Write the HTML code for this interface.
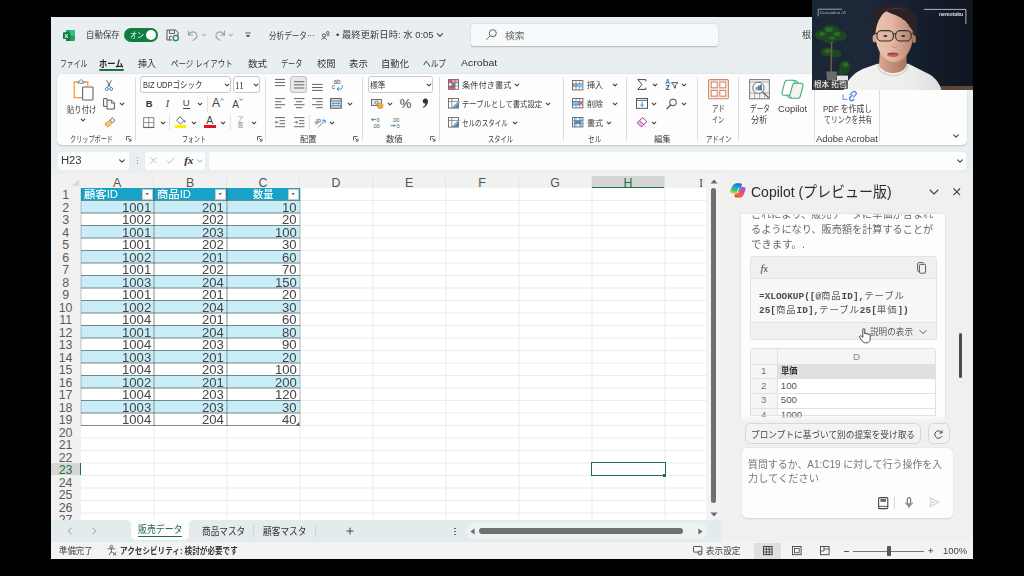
<!DOCTYPE html>
<html lang="ja"><head><meta charset="utf-8"><title>Excel Copilot</title>
<style>

html,body{margin:0;padding:0;background:#000;}
body{width:1024px;height:576px;overflow:hidden;font-family:"Liberation Sans","Noto Sans CJK JP",sans-serif;}
#root{position:relative;width:1024px;height:576px;overflow:hidden;background:#000;}
#root div,#root svg,#root span.t{position:absolute;}
#root div{box-sizing:border-box;}
span.t{white-space:nowrap;transform-origin:0 50%;display:block;}
svg{overflow:visible;}

</style></head>
<body><div id="root">
<div style="left:51px;top:17px;width:922px;height:541.8px;background:#e9eef1;"></div>
<svg style="left:62.5px;top:29.5px;" width="12" height="11" viewBox="0 0 12 11"><rect x="3" y="0" width="9" height="11" rx="1" fill="#21a366"/><rect x="7.5" y="0" width="4.5" height="5.5" fill="#33c481"/><rect x="3" y="5.5" width="4.5" height="5.5" fill="#107c41"/><rect x="0" y="2.2" width="6.8" height="6.8" rx="0.8" fill="#0f7a3f"/><text x="3.4" y="7.6" font-size="5.4" font-weight="700" fill="#fff" text-anchor="middle" font-family="Liberation Sans, sans-serif">X</text></svg>
<span class="t" style="top:28px;height:14px;line-height:14px;font-size:8.6px;color:#3b3b3b;left:85.60px;transform:scaleX(0.9828);">自動保存</span>
<div style="left:124px;top:27.6px;width:34px;height:14.2px;background:#107c41;border-radius:7.1px;"></div>
<span class="t" style="top:29px;height:13px;line-height:13px;font-size:7.6px;color:#fff;left:129.50px;transform:scaleX(0.9218);">オン</span>
<div style="left:146px;top:29.6px;width:10.2px;height:10.2px;background:#fff;border-radius:50%;"></div>
<svg style="left:166px;top:28.7px;" width="13" height="12" viewBox="0 0 13 12"><path d="M1 1 H9.5 L12 3.5 V6" fill="none" stroke="#555" stroke-width="1"/><path d="M1 1 V11 H6" fill="none" stroke="#555" stroke-width="1"/><path d="M3.5 1 V4.5 H8.5 V1" fill="none" stroke="#555" stroke-width="0.9"/><path d="M3.5 11 V7.5 H6" fill="none" stroke="#555" stroke-width="0.9"/><circle cx="9.8" cy="9" r="2.6" fill="none" stroke="#1e8e4e" stroke-width="1.2"/><path d="M11 5.6 L12.4 7 L10.6 7.6 Z M8.6 12.4 L7.2 11 L9 10.4 Z" fill="#1e8e4e"/></svg>
<svg style="left:187px;top:29.5px;" width="12" height="11" viewBox="0 0 12 11"><path d="M1.5 1 V5 H5.5" fill="none" stroke="#9aa0a4" stroke-width="1.1" stroke-linecap="round"/><path d="M1.8 4.8 C3 2.2 6 1.2 8.2 2.4 C10.8 3.8 10.6 7.4 8 9 L6 10.4" fill="none" stroke="#9aa0a4" stroke-width="1.1" stroke-linecap="round"/></svg>
<svg style="left:199.8px;top:31.2px;" width="8" height="8" viewBox="0 0 8 8"><path d="M2.4 3.2 L4 4.8 L5.6 3.2" fill="none" stroke="#b0b4b8" stroke-width="1.1" stroke-linecap="round" stroke-linejoin="round"/></svg>
<svg style="left:214px;top:29.5px;" width="12" height="11" viewBox="0 0 12 11"><path d="M10.5 1 V5 H6.5" fill="none" stroke="#9aa0a4" stroke-width="1.1" stroke-linecap="round"/><path d="M10.2 4.8 C9 2.2 6 1.2 3.8 2.4 C1.2 3.8 1.4 7.4 4 9 L6 10.4" fill="none" stroke="#9aa0a4" stroke-width="1.1" stroke-linecap="round"/></svg>
<svg style="left:227.3px;top:31.2px;" width="8" height="8" viewBox="0 0 8 8"><path d="M2.4 3.2 L4 4.8 L5.6 3.2" fill="none" stroke="#b0b4b8" stroke-width="1.1" stroke-linecap="round" stroke-linejoin="round"/></svg>
<svg style="left:244.5px;top:32px;" width="6" height="6" viewBox="0 0 6 6"><path d="M0.5 1 H5.5" stroke="#555" stroke-width="1"/><path d="M0.8 3 H5.2 L3 5.4 Z" fill="#555"/></svg>
<span class="t" style="top:28px;height:14px;line-height:14px;font-size:8.6px;color:#3b3b3b;left:268.50px;transform:scaleX(0.8819);">分析データ<span style="font-family:'Noto Sans CJK JP',sans-serif">…</span></span>
<svg style="left:320.5px;top:30.5px;" width="9" height="9" viewBox="0 0 9 9"><circle cx="3" cy="4.6" r="1.6" fill="none" stroke="#444" stroke-width="0.9"/><path d="M0.6 8.6 C0.8 6.6 5.2 6.6 5.4 8.6" fill="none" stroke="#444" stroke-width="0.9"/><circle cx="6.8" cy="1.8" r="1.3" fill="none" stroke="#444" stroke-width="0.8"/><path d="M5.6 4.8 C6 3.6 8.2 3.8 8.5 5" fill="none" stroke="#444" stroke-width="0.8"/></svg>
<span class="t" style="top:28px;height:14px;line-height:14px;font-size:8.8px;color:#3b3b3b;left:336.00px;transform:scaleX(1.0648);">• 最終更新日時: 水 0:05</span>
<svg style="left:435.8px;top:31px;" width="8" height="8" viewBox="0 0 8 8"><path d="M1.4 2.7 L4 5.3 L6.6 2.7" fill="none" stroke="#444" stroke-width="1.1" stroke-linecap="round" stroke-linejoin="round"/></svg>
<div style="left:470.5px;top:24.2px;width:247.8px;height:21.6px;background:#f7f9fa;border-radius:3px;box-shadow:0 0.5px 1.5px rgba(0,0,0,0.25);"></div>
<svg style="left:485.6px;top:29px;" width="11" height="11" viewBox="0 0 11 11"><circle cx="6.8" cy="4.2" r="3.5" fill="none" stroke="#555" stroke-width="0.9"/><path d="M4.2 6.8 L0.6 10.4" stroke="#555" stroke-width="0.9" stroke-linecap="round"/></svg>
<span class="t" style="top:28px;height:15px;line-height:15px;font-size:9.4px;color:#666;left:504.80px;transform:scaleX(1.0498);">検索</span>
<span class="t" style="top:28px;height:14px;line-height:14px;font-size:9px;color:#3b3b3b;left:802.00px;transform:scaleX(0.9991);">根本</span>
<span class="t" style="top:56px;height:15px;line-height:15px;font-size:9.4px;color:#333;left:59.50px;transform:scaleX(0.7277);">ファイル</span>
<span class="t" style="top:56px;height:15px;line-height:15px;font-size:9.4px;color:#333;left:137.50px;transform:scaleX(0.9592);">挿入</span>
<span class="t" style="top:56px;height:15px;line-height:15px;font-size:9.4px;color:#333;left:170.80px;transform:scaleX(0.7969);">ページ レイアウト</span>
<span class="t" style="top:56px;height:15px;line-height:15px;font-size:9.4px;color:#333;left:247.50px;transform:scaleX(1.0125);">数式</span>
<span class="t" style="top:56px;height:15px;line-height:15px;font-size:9.4px;color:#333;left:281.00px;transform:scaleX(0.7569);">データ</span>
<span class="t" style="top:56px;height:15px;line-height:15px;font-size:9.4px;color:#333;left:316.80px;transform:scaleX(0.9965);">校閲</span>
<span class="t" style="top:56px;height:15px;line-height:15px;font-size:9.4px;color:#333;left:349.00px;transform:scaleX(1.0018);">表示</span>
<span class="t" style="top:56px;height:15px;line-height:15px;font-size:9.4px;color:#333;left:381.00px;transform:scaleX(0.9950);">自動化</span>
<span class="t" style="top:56px;height:15px;line-height:15px;font-size:9.4px;color:#333;left:423.00px;transform:scaleX(0.8173);">ヘルプ</span>
<span class="t" style="top:55px;height:15px;line-height:15px;font-size:9.4px;color:#333;left:461.00px;transform:scaleX(1.1234);">Acrobat</span>
<span class="t" style="top:56px;height:15px;line-height:15px;font-size:9.4px;color:#222;font-weight:700;left:99.30px;transform:scaleX(0.8799);">ホーム</span>
<div style="left:99.3px;top:69.2px;width:24.6px;height:1.6px;background:#1e7145;border-radius:1px;"></div>
<div style="left:57px;top:74px;width:910px;height:71.2px;background:#fdfdfd;border-radius:5px;box-shadow:0 0.5px 1.5px rgba(0,0,0,0.18);"></div>
<svg style="left:73px;top:79px;" width="21" height="22" viewBox="0 0 21 22"><path d="M5 3 H1.2 V18.6 H9" fill="none" stroke="#e8a33d" stroke-width="1.3"/><path d="M11 3 H14.8 V7" fill="none" stroke="#e8a33d" stroke-width="1.3"/><path d="M5 4.2 V2.6 H6.4 C6.4 0.2 9.6 0.2 9.6 2.6 H11 V4.2 Z" fill="#fdfdfd" stroke="#777" stroke-width="0.9"/><rect x="9.6" y="8" width="10.4" height="13" rx="0.8" fill="#fdfdfd" stroke="#666" stroke-width="1.1"/></svg>
<span class="t" style="top:103px;height:14px;line-height:14px;font-size:8.6px;color:#3b3b3b;left:67.00px;transform:scaleX(0.8578);">貼り付け</span>
<svg style="left:78.8px;top:116.2px;" width="8" height="8" viewBox="0 0 8 8"><path d="M2.2 3.1 L4 4.9 L5.8 3.1" fill="none" stroke="#444" stroke-width="1.1" stroke-linecap="round" stroke-linejoin="round"/></svg>
<svg style="left:103.5px;top:80px;" width="10" height="11" viewBox="0 0 10 11"><path d="M2.6 0.4 L6.6 7.6 M7.4 0.4 L3.4 7.6" stroke="#555" stroke-width="0.9" fill="none"/><circle cx="2.8" cy="9" r="1.5" fill="none" stroke="#3c8fd0" stroke-width="1"/><circle cx="7.2" cy="9" r="1.5" fill="none" stroke="#3c8fd0" stroke-width="1"/></svg>
<svg style="left:103px;top:98px;" width="13" height="11.5" viewBox="0 0 13 11.5"><path d="M4 2.2 V0.6 H0.6 V8.4 H3.6" fill="none" stroke="#555" stroke-width="1"/><path d="M4 2.2 H8.6 L11.4 5 V11 H4 Z" fill="#fdfdfd" stroke="#555" stroke-width="1"/><path d="M8.4 2.4 V5.2 H11.2" fill="none" stroke="#555" stroke-width="0.8"/></svg>
<svg style="left:118.2px;top:99.6px;" width="8" height="8" viewBox="0 0 8 8"><path d="M2.2 3.1 L4 4.9 L5.8 3.1" fill="none" stroke="#444" stroke-width="1.1" stroke-linecap="round" stroke-linejoin="round"/></svg>
<svg style="left:104px;top:116.8px;" width="12" height="11" viewBox="0 0 12 11"><path d="M8.2 0.8 L11 3.4 L8.6 5.6 L6 3 Z" fill="none" stroke="#555" stroke-width="0.9"/><path d="M5.8 3.2 L8.4 5.8 L4 10.2 L0.8 7 Z" fill="#f6c58b" stroke="#e58a2c" stroke-width="0.9"/></svg>
<span class="t" style="top:132px;height:14px;line-height:14px;font-size:8.4px;color:#3b3b3b;left:69.50px;transform:scaleX(0.7335);">クリップボード</span>
<svg style="left:126.3px;top:135.6px;" width="6" height="6" viewBox="0 0 6 6"><path d="M0.5 4.5 V0.5 H4.5" fill="none" stroke="#555" stroke-width="0.9"/><path d="M2 2 L5 5 M5 2.6 V5 H2.6" fill="none" stroke="#555" stroke-width="0.9"/></svg>
<div style="left:134.7px;top:77px;width:1px;height:64px;background:#dcdcdc;"></div>
<div style="left:140.2px;top:76.3px;width:90.6px;height:17.2px;background:#fff;border:1px solid #c9c9c9;border-radius:3px;"></div>
<span class="t" style="top:78px;height:14px;line-height:14px;font-size:9.2px;color:#333;left:142.60px;transform:scaleX(0.8137);">BIZ UDPゴシック</span>
<svg style="left:222.9px;top:81.4px;" width="8" height="8" viewBox="0 0 8 8"><path d="M2.2 3.1 L4 4.9 L5.8 3.1" fill="none" stroke="#444" stroke-width="1.1" stroke-linecap="round" stroke-linejoin="round"/></svg>
<div style="left:232.8px;top:76.3px;width:27px;height:17.2px;background:#fff;border:1px solid #c9c9c9;border-radius:3px;"></div>
<span class="t" style="top:78px;height:15px;line-height:15px;font-size:9.8px;color:#333;font-family:'Liberation Serif','Noto Serif CJK SC',serif;left:235.20px;transform:scaleX(0.9113);">11</span>
<svg style="left:251.5px;top:81.4px;" width="8" height="8" viewBox="0 0 8 8"><path d="M2.2 3.1 L4 4.9 L5.8 3.1" fill="none" stroke="#444" stroke-width="1.1" stroke-linecap="round" stroke-linejoin="round"/></svg>
<span class="t" style="top:96px;height:15px;line-height:15px;font-size:9.4px;color:#333;font-weight:700;left:145.81px;">B</span>
<span class="t" style="top:96px;height:15px;line-height:15px;font-size:10.4px;color:#444;font-family:'Liberation Serif','Noto Serif CJK SC',serif;left:165.87px;font-style:italic;">I</span>
<span class="t" style="top:95px;height:15px;line-height:15px;font-size:9.6px;color:#444;left:182.73px;">U</span>
<div style="left:182.6px;top:108px;width:7.2px;height:0.9px;background:#444;"></div>
<svg style="left:195.8px;top:99.8px;" width="8" height="8" viewBox="0 0 8 8"><path d="M2.2 3.1 L4 4.9 L5.8 3.1" fill="none" stroke="#444" stroke-width="1.1" stroke-linecap="round" stroke-linejoin="round"/></svg>
<div style="left:207.1px;top:96px;width:1px;height:16px;background:#e2e2e2;"></div>
<span class="t" style="top:94px;height:18px;line-height:18px;font-size:12px;color:#444;left:211.99px;">A</span>
<svg style="left:219.8px;top:97.6px;" width="4" height="3" viewBox="0 0 4 3"><path d="M0.4 2.4 L2 0.6 L3.6 2.4" fill="none" stroke="#2a7fc1" stroke-width="0.9"/></svg>
<span class="t" style="top:97px;height:15px;line-height:15px;font-size:10px;color:#444;left:232.26px;">A</span>
<svg style="left:238.6px;top:98.2px;" width="4" height="3" viewBox="0 0 4 3"><path d="M0.4 0.6 L2 2.4 L3.6 0.6" fill="none" stroke="#2a7fc1" stroke-width="0.9"/></svg>
<svg style="left:143.3px;top:116.6px;" width="11.4" height="11" viewBox="0 0 11.4 11"><rect x="0.6" y="0.6" width="10.2" height="9.8" fill="none" stroke="#8a8a8a" stroke-width="1"/><path d="M5.7 0.6 V10.4 M0.6 5.5 H10.8" stroke="#8a8a8a" stroke-width="0.9"/><path d="M0.2 10.5 H11.2" stroke="#666" stroke-width="1.1"/></svg>
<svg style="left:158.5px;top:118.6px;" width="8" height="8" viewBox="0 0 8 8"><path d="M2.2 3.1 L4 4.9 L5.8 3.1" fill="none" stroke="#444" stroke-width="1.1" stroke-linecap="round" stroke-linejoin="round"/></svg>
<div style="left:169px;top:114.5px;width:1px;height:15.5px;background:#e2e2e2;"></div>
<svg style="left:175px;top:116px;" width="12" height="9" viewBox="0 0 12 9"><path d="M5 0.8 L9 4.6 L5.4 8 L1.6 4.4 Z" fill="none" stroke="#555" stroke-width="0.9"/><path d="M9.4 3.6 C10.8 5.2 10.8 6.6 9.8 6.6 C8.8 6.6 8.8 5.2 9.4 3.6 Z" fill="#2a7fc1"/></svg>
<div style="left:174.5px;top:125.2px;width:11.6px;height:3px;background:#ffee00;"></div>
<svg style="left:189.8px;top:118.6px;" width="8" height="8" viewBox="0 0 8 8"><path d="M2.2 3.1 L4 4.9 L5.8 3.1" fill="none" stroke="#444" stroke-width="1.1" stroke-linecap="round" stroke-linejoin="round"/></svg>
<span class="t" style="top:113px;height:15px;line-height:15px;font-size:10.4px;color:#444;left:206.33px;">A</span>
<div style="left:204px;top:125.2px;width:11.6px;height:3px;background:#e0141e;"></div>
<svg style="left:219.3px;top:118.6px;" width="8" height="8" viewBox="0 0 8 8"><path d="M2.2 3.1 L4 4.9 L5.8 3.1" fill="none" stroke="#444" stroke-width="1.1" stroke-linecap="round" stroke-linejoin="round"/></svg>
<div style="left:230px;top:114.5px;width:1px;height:15.5px;background:#e2e2e2;"></div>
<span class="t" style="top:114px;height:10px;line-height:10px;font-size:6px;color:#999;left:237.59px;">ア</span>
<span class="t" style="top:120px;height:10px;line-height:10px;font-size:6px;color:#999;left:237.59px;">亜</span>
<svg style="left:250px;top:118.6px;" width="8" height="8" viewBox="0 0 8 8"><path d="M2.2 3.1 L4 4.9 L5.8 3.1" fill="none" stroke="#444" stroke-width="1.1" stroke-linecap="round" stroke-linejoin="round"/></svg>
<span class="t" style="top:132px;height:14px;line-height:14px;font-size:8.4px;color:#3b3b3b;left:182.30px;transform:scaleX(0.7164);">フォント</span>
<svg style="left:256.8px;top:135.6px;" width="6" height="6" viewBox="0 0 6 6"><path d="M0.5 4.5 V0.5 H4.5" fill="none" stroke="#555" stroke-width="0.9"/><path d="M2 2 L5 5 M5 2.6 V5 H2.6" fill="none" stroke="#555" stroke-width="0.9"/></svg>
<div style="left:265.1px;top:77px;width:1px;height:64px;background:#dcdcdc;"></div>
<svg style="left:275px;top:78px;" width="10" height="9" viewBox="0 0 10 9"><path d="M0 1.4 H10" stroke="#555" stroke-width="0.9"/><path d="M0 4.5 H10" stroke="#555" stroke-width="0.9"/><path d="M0 7.6 H10" stroke="#555" stroke-width="0.9"/></svg>
<div style="left:290px;top:76.3px;width:17.3px;height:17.2px;background:#e9e9e9;border:1px solid #bdbdbd;border-radius:3px;"></div>
<svg style="left:293.6px;top:80px;" width="10.4" height="9" viewBox="0 0 10.4 9"><path d="M0 1.7 H10.4" stroke="#555" stroke-width="0.9"/><path d="M0 4.8 H10.4" stroke="#555" stroke-width="0.9"/><path d="M0 8 H10.4" stroke="#555" stroke-width="0.9"/></svg>
<svg style="left:312.3px;top:83px;" width="10.7" height="9" viewBox="0 0 10.7 9"><path d="M0 1.4 H10.7" stroke="#555" stroke-width="0.9"/><path d="M0 4.5 H10.7" stroke="#555" stroke-width="0.9"/><path d="M0 7.4 H10.7" stroke="#555" stroke-width="0.9"/></svg>
<span class="t" style="top:76px;height:11px;line-height:11px;font-size:6.4px;color:#555;left:333.45px;">ab</span>
<span class="t" style="top:81px;height:11px;line-height:11px;font-size:6.4px;color:#555;left:331.80px;">c</span>
<svg style="left:335.5px;top:84.6px;" width="7" height="6" viewBox="0 0 7 6"><path d="M6.2 0.4 V2.6 C6.2 3.6 5.6 4 4.6 4 H1.2 M2.8 2.2 L1 4 L2.8 5.8" fill="none" stroke="#2a7fc1" stroke-width="0.9"/></svg>
<svg style="left:275px;top:98px;" width="10" height="10.4" viewBox="0 0 10 10.4"><path d="M0 0.6 H10" stroke="#555" stroke-width="0.9"/><path d="M0 3.7 H6.4" stroke="#555" stroke-width="0.9"/><path d="M0 6.7 H10" stroke="#555" stroke-width="0.9"/><path d="M0 9.7 H6.4" stroke="#555" stroke-width="0.9"/></svg>
<svg style="left:293.6px;top:98px;" width="10.4" height="10.4" viewBox="0 0 10.4 10.4"><path d="M0 0.6 H10.4" stroke="#555" stroke-width="0.9"/><path d="M2 3.7 H8.4" stroke="#555" stroke-width="0.9"/><path d="M0 6.7 H10.4" stroke="#555" stroke-width="0.9"/><path d="M2 9.7 H8.4" stroke="#555" stroke-width="0.9"/></svg>
<svg style="left:312.3px;top:98px;" width="10.7" height="10.4" viewBox="0 0 10.7 10.4"><path d="M0 0.6 H10.7" stroke="#555" stroke-width="0.9"/><path d="M4.1 3.7 H10.7" stroke="#555" stroke-width="0.9"/><path d="M0 6.7 H10.7" stroke="#555" stroke-width="0.9"/><path d="M4.1 9.7 H10.7" stroke="#555" stroke-width="0.9"/></svg>
<svg style="left:330.3px;top:97.8px;" width="11.8" height="10.8" viewBox="0 0 11.8 10.8"><rect x="0.6" y="0.6" width="10.6" height="9.6" fill="#d8ecf8" stroke="#555" stroke-width="1"/><path d="M0.6 3 H11.2 M0.6 7.8 H11.2" stroke="#555" stroke-width="0.8"/><path d="M2.4 5.4 H9.4 M3.6 4.2 L2.4 5.4 L3.6 6.6 M8.2 4.2 L9.4 5.4 L8.2 6.6" fill="none" stroke="#2a7fc1" stroke-width="0.8"/></svg>
<svg style="left:345.8px;top:99.8px;" width="8" height="8" viewBox="0 0 8 8"><path d="M2.2 3.1 L4 4.9 L5.8 3.1" fill="none" stroke="#444" stroke-width="1.1" stroke-linecap="round" stroke-linejoin="round"/></svg>
<svg style="left:275px;top:117px;" width="10" height="10.4" viewBox="0 0 10 10.4"><path d="M0 0.6 H10" stroke="#555" stroke-width="0.9"/><path d="M0 9.7 H10" stroke="#555" stroke-width="0.9"/><path d="M4.6 3.7 H10" stroke="#555" stroke-width="0.9"/><path d="M4.6 6.7 H10" stroke="#555" stroke-width="0.9"/><path d="M0.4 5.2 H3.6 M1.6 3.8 L0.4 5.2 L1.6 6.6" fill="none" stroke="#2a7fc1" stroke-width="0.9"/></svg>
<svg style="left:293.6px;top:117px;" width="10.4" height="10.4" viewBox="0 0 10.4 10.4"><path d="M0 0.6 H10.4" stroke="#555" stroke-width="0.9"/><path d="M0 9.7 H10.4" stroke="#555" stroke-width="0.9"/><path d="M5 3.7 H10.4" stroke="#555" stroke-width="0.9"/><path d="M5 6.7 H10.4" stroke="#555" stroke-width="0.9"/><path d="M0.2 5.2 H3.6 M2.4 3.8 L3.6 5.2 L2.4 6.6" fill="none" stroke="#2a7fc1" stroke-width="0.9"/></svg>
<div style="left:309.2px;top:114.5px;width:1px;height:15.5px;background:#e2e2e2;"></div>
<svg style="left:314px;top:116.5px;" width="12" height="11" viewBox="0 0 12 11"><text x="1" y="6.4" font-size="6.4" fill="#555" transform="rotate(-35 4 6)" font-family="Liberation Sans, sans-serif">ab</text><path d="M4 10.4 L11 3.4 M8.2 3.2 H11.2 V6.2" fill="none" stroke="#2a7fc1" stroke-width="0.9"/></svg>
<svg style="left:327.5px;top:118.6px;" width="8" height="8" viewBox="0 0 8 8"><path d="M2.2 3.1 L4 4.9 L5.8 3.1" fill="none" stroke="#444" stroke-width="1.1" stroke-linecap="round" stroke-linejoin="round"/></svg>
<span class="t" style="top:132px;height:14px;line-height:14px;font-size:8.4px;color:#3b3b3b;left:299.80px;transform:scaleX(0.9851);">配置</span>
<svg style="left:353.2px;top:135.6px;" width="6" height="6" viewBox="0 0 6 6"><path d="M0.5 4.5 V0.5 H4.5" fill="none" stroke="#555" stroke-width="0.9"/><path d="M2 2 L5 5 M5 2.6 V5 H2.6" fill="none" stroke="#555" stroke-width="0.9"/></svg>
<div style="left:361.8px;top:77px;width:1px;height:64px;background:#dcdcdc;"></div>
<div style="left:367.8px;top:76.3px;width:64.8px;height:17.2px;background:#fff;border:1px solid #c9c9c9;border-radius:3px;"></div>
<span class="t" style="top:78px;height:14px;line-height:14px;font-size:8.4px;color:#333;left:370.20px;transform:scaleX(0.9313);">標準</span>
<svg style="left:424.7px;top:81.4px;" width="8" height="8" viewBox="0 0 8 8"><path d="M2.2 3.1 L4 4.9 L5.8 3.1" fill="none" stroke="#444" stroke-width="1.1" stroke-linecap="round" stroke-linejoin="round"/></svg>
<svg style="left:370.5px;top:98.5px;" width="12.5" height="10" viewBox="0 0 12.5 10"><rect x="0.5" y="0.5" width="10" height="6" fill="#e6e6e6" stroke="#666" stroke-width="0.9"/><circle cx="5.5" cy="3.5" r="1.6" fill="none" stroke="#666" stroke-width="0.8"/><ellipse cx="9.2" cy="5.6" rx="2.6" ry="1.2" fill="#f3a64a" stroke="#d97f1c" stroke-width="0.6"/><path d="M6.6 5.6 V8.4 C6.6 9.8 11.8 9.8 11.8 8.4 V5.6" fill="#f3a64a" stroke="#d97f1c" stroke-width="0.6"/></svg>
<svg style="left:386px;top:99.8px;" width="8" height="8" viewBox="0 0 8 8"><path d="M2.2 3.1 L4 4.9 L5.8 3.1" fill="none" stroke="#444" stroke-width="1.1" stroke-linecap="round" stroke-linejoin="round"/></svg>
<span class="t" style="top:94px;height:19px;line-height:19px;font-size:13px;color:#444;left:399.82px;">%</span>
<svg style="left:421.8px;top:98.4px;" width="6.4" height="10.4" viewBox="0 0 6.4 10.4"><path d="M3.4 0.6 C5 0.6 6 1.8 6 3.6 C6 6.4 4 8.8 1.2 9.8 L0.8 9 C2.4 8.2 3.4 7 3.6 5.6 C2 5.8 0.8 4.8 0.8 3.2 C0.8 1.6 2 0.6 3.4 0.6 Z" fill="#333"/></svg>
<svg style="left:371px;top:116.5px;" width="11.5" height="11.5" viewBox="0 0 11.5 11.5"><path d="M0.6 2.6 H5 M2 1.2 L0.6 2.6 L2 4" fill="none" stroke="#2a7fc1" stroke-width="0.9"/><text x="5.6" y="5" font-size="5.6" fill="#555" font-family="Liberation Sans, sans-serif">0</text><text x="1.2" y="11" font-size="5.6" fill="#555" font-family="Liberation Sans, sans-serif">.00</text></svg>
<svg style="left:389.5px;top:116.5px;" width="11.5" height="11.5" viewBox="0 0 11.5 11.5"><text x="1.6" y="5" font-size="5.6" fill="#555" font-family="Liberation Sans, sans-serif">.00</text><path d="M0.6 8.6 H5 M3.6 7.2 L5 8.6 L3.6 10" fill="none" stroke="#2a7fc1" stroke-width="0.9"/><text x="6.6" y="11" font-size="5.6" fill="#555" font-family="Liberation Sans, sans-serif">0</text></svg>
<span class="t" style="top:132px;height:14px;line-height:14px;font-size:8.4px;color:#3b3b3b;left:386.30px;transform:scaleX(0.9970);">数値</span>
<svg style="left:430.4px;top:135.6px;" width="6" height="6" viewBox="0 0 6 6"><path d="M0.5 4.5 V0.5 H4.5" fill="none" stroke="#555" stroke-width="0.9"/><path d="M2 2 L5 5 M5 2.6 V5 H2.6" fill="none" stroke="#555" stroke-width="0.9"/></svg>
<div style="left:438.5px;top:77px;width:1px;height:64px;background:#dcdcdc;"></div>
<svg style="left:447.8px;top:79.4px;" width="11" height="10.8" viewBox="0 0 11 10.8"><rect x="0.5" y="0.5" width="10" height="9.8" fill="#fff" stroke="#666" stroke-width="0.9"/><rect x="0.9" y="0.9" width="3" height="3" fill="#e8505b"/><rect x="3.9" y="0.9" width="6.2" height="3" fill="#f2a0a6"/><rect x="3.9" y="3.9" width="3.2" height="3" fill="#3c8fd0"/><rect x="0.9" y="6.9" width="6.2" height="3" fill="#e8505b"/><path d="M3.9 0.5 V10.3 M7.1 0.5 V10.3 M0.5 3.9 H10.5 M0.5 6.9 H10.5" stroke="#666" stroke-width="0.6"/></svg>
<span class="t" style="top:78px;height:14px;line-height:14px;font-size:8.4px;color:#3b3b3b;left:462.20px;transform:scaleX(0.9831);">条件付き書式</span>
<svg style="left:513.3px;top:81.4px;" width="8" height="8" viewBox="0 0 8 8"><path d="M2.2 3.1 L4 4.9 L5.8 3.1" fill="none" stroke="#444" stroke-width="1.1" stroke-linecap="round" stroke-linejoin="round"/></svg>
<svg style="left:447.8px;top:98px;" width="11.5" height="11" viewBox="0 0 11.5 11"><rect x="0.5" y="0.5" width="10" height="9.6" fill="#fff" stroke="#666" stroke-width="0.9"/><path d="M0.5 3.4 H10.5 M3.8 0.5 V10.1" stroke="#666" stroke-width="0.7"/><path d="M3.8 10.1 L10.5 3.4 V10.1 Z" fill="#3c8fd0"/><path d="M4.6 9.4 L10.6 3 L11.4 3.8 L5.6 10 Z" fill="#fff" stroke="#555" stroke-width="0.6"/></svg>
<svg style="left:447.8px;top:117px;" width="11.5" height="11" viewBox="0 0 11.5 11"><rect x="0.5" y="0.5" width="10" height="9.6" fill="#fff" stroke="#666" stroke-width="0.9"/><path d="M0.5 3.4 H10.5 M3.8 0.5 V10.1" stroke="#666" stroke-width="0.7"/><path d="M3.8 10.1 L10.5 3.4 V10.1 Z" fill="#3c8fd0"/><path d="M4.6 9.4 L10.6 3 L11.4 3.8 L5.6 10 Z" fill="#fff" stroke="#555" stroke-width="0.6"/></svg>
<span class="t" style="top:97px;height:14px;line-height:14px;font-size:8.4px;color:#3b3b3b;left:462.20px;transform:scaleX(0.8766);">テーブルとして書式設定</span>
<svg style="left:543.8px;top:99.8px;" width="8" height="8" viewBox="0 0 8 8"><path d="M2.2 3.1 L4 4.9 L5.8 3.1" fill="none" stroke="#444" stroke-width="1.1" stroke-linecap="round" stroke-linejoin="round"/></svg>
<span class="t" style="top:116px;height:14px;line-height:14px;font-size:8.4px;color:#3b3b3b;left:462.20px;transform:scaleX(0.7812);">セルのスタイル</span>
<svg style="left:511px;top:118.6px;" width="8" height="8" viewBox="0 0 8 8"><path d="M2.2 3.1 L4 4.9 L5.8 3.1" fill="none" stroke="#444" stroke-width="1.1" stroke-linecap="round" stroke-linejoin="round"/></svg>
<span class="t" style="top:132px;height:14px;line-height:14px;font-size:8.4px;color:#3b3b3b;left:488.40px;transform:scaleX(0.7463);">スタイル</span>
<div style="left:562.9px;top:77px;width:1px;height:64px;background:#dcdcdc;"></div>
<svg style="left:572px;top:79.7px;" width="11.6" height="10.6" viewBox="0 0 11.6 10.6"><rect x="0.5" y="0.5" width="10.4" height="9.4" fill="#fff" stroke="#666" stroke-width="0.9"/><path d="M0.5 3.6 H10.9 M0.5 6.8 H10.9 M4 0.5 V9.9 M7.6 0.5 V9.9" stroke="#666" stroke-width="0.6"/><rect x="4" y="3.6" width="6.9" height="3.2" fill="#7cbdea"/><path d="M1 5.2 H5 M2.4 4 L1 5.2 L2.4 6.4" fill="none" stroke="#2a7fc1" stroke-width="0.9"/></svg>
<span class="t" style="top:78px;height:14px;line-height:14px;font-size:8.4px;color:#3b3b3b;left:586.90px;transform:scaleX(0.9612);">挿入</span>
<svg style="left:610.7px;top:81.4px;" width="8" height="8" viewBox="0 0 8 8"><path d="M2.2 3.1 L4 4.9 L5.8 3.1" fill="none" stroke="#444" stroke-width="1.1" stroke-linecap="round" stroke-linejoin="round"/></svg>
<svg style="left:572px;top:98.2px;" width="11.6" height="10.6" viewBox="0 0 11.6 10.6"><rect x="0.5" y="0.5" width="10.4" height="9.4" fill="#fff" stroke="#666" stroke-width="0.9"/><path d="M0.5 3.6 H10.9 M0.5 6.8 H10.9 M4 0.5 V9.9 M7.6 0.5 V9.9" stroke="#666" stroke-width="0.6"/><rect x="0.5" y="3.4" width="6.2" height="3.6" fill="#7cbdea" stroke="#2a7fc1" stroke-width="0.6"/><path d="M7.6 3.8 L10.4 6.6 M10.4 3.8 L7.6 6.6" stroke="#e0303a" stroke-width="1"/></svg>
<span class="t" style="top:97px;height:14px;line-height:14px;font-size:8.4px;color:#3b3b3b;left:586.90px;transform:scaleX(0.9612);">削除</span>
<svg style="left:610.7px;top:99.8px;" width="8" height="8" viewBox="0 0 8 8"><path d="M2.2 3.1 L4 4.9 L5.8 3.1" fill="none" stroke="#444" stroke-width="1.1" stroke-linecap="round" stroke-linejoin="round"/></svg>
<svg style="left:572px;top:117px;" width="11.6" height="10.6" viewBox="0 0 11.6 10.6"><rect x="0.5" y="0.5" width="10.4" height="9.4" fill="#fff" stroke="#666" stroke-width="0.9"/><path d="M0.5 3.6 H10.9 M0.5 6.8 H10.9 M4 0.5 V9.9 M7.6 0.5 V9.9" stroke="#666" stroke-width="0.6"/><rect x="2.6" y="3.6" width="6.4" height="3.2" fill="#3c8fd0"/><path d="M2.6 0 V10.4 M9 0 V10.4" stroke="#2a7fc1" stroke-width="0.7"/></svg>
<span class="t" style="top:116px;height:14px;line-height:14px;font-size:8.4px;color:#3b3b3b;left:586.90px;transform:scaleX(0.9612);">書式</span>
<svg style="left:605px;top:118.6px;" width="8" height="8" viewBox="0 0 8 8"><path d="M2.2 3.1 L4 4.9 L5.8 3.1" fill="none" stroke="#444" stroke-width="1.1" stroke-linecap="round" stroke-linejoin="round"/></svg>
<span class="t" style="top:132px;height:14px;line-height:14px;font-size:8.4px;color:#3b3b3b;left:588.40px;transform:scaleX(0.7940);">セル</span>
<div style="left:625.9px;top:77px;width:1px;height:64px;background:#dcdcdc;"></div>
<svg style="left:636.8px;top:79.4px;" width="9.6" height="11" viewBox="0 0 9.6 11"><path d="M8.8 2.4 V0.6 H0.8 L5 5.5 L0.8 10.4 H8.8 V8.6" fill="none" stroke="#444" stroke-width="1"/></svg>
<svg style="left:651px;top:81.4px;" width="8" height="8" viewBox="0 0 8 8"><path d="M2.2 3.1 L4 4.9 L5.8 3.1" fill="none" stroke="#444" stroke-width="1.1" stroke-linecap="round" stroke-linejoin="round"/></svg>
<span class="t" style="top:76px;height:11px;line-height:11px;font-size:6.4px;color:#2a7fc1;font-weight:700;left:665.29px;">A</span>
<span class="t" style="top:82px;height:11px;line-height:11px;font-size:6.4px;color:#444;font-weight:700;left:665.65px;">Z</span>
<svg style="left:670.6px;top:82px;" width="7.4" height="7" viewBox="0 0 7.4 7"><path d="M0.5 0.6 H6.9 L4.4 3.6 V6.2 L3 5.4 V3.6 Z" fill="none" stroke="#444" stroke-width="0.9"/></svg>
<svg style="left:679.8px;top:81.4px;" width="8" height="8" viewBox="0 0 8 8"><path d="M2.2 3.1 L4 4.9 L5.8 3.1" fill="none" stroke="#444" stroke-width="1.1" stroke-linecap="round" stroke-linejoin="round"/></svg>
<svg style="left:635.6px;top:98px;" width="12" height="10.8" viewBox="0 0 12 10.8"><rect x="0.5" y="0.5" width="11" height="9.8" fill="#fff" stroke="#555" stroke-width="1"/><path d="M0.5 2.4 H11.5" stroke="#555" stroke-width="0.9"/><path d="M6 3.6 V8.4 M4.2 6.6 L6 8.4 L7.8 6.6" fill="none" stroke="#2a7fc1" stroke-width="0.9"/></svg>
<svg style="left:649.8px;top:99.8px;" width="8" height="8" viewBox="0 0 8 8"><path d="M2.2 3.1 L4 4.9 L5.8 3.1" fill="none" stroke="#444" stroke-width="1.1" stroke-linecap="round" stroke-linejoin="round"/></svg>
<svg style="left:666.2px;top:97.6px;" width="11.4" height="11.4" viewBox="0 0 11.4 11.4"><circle cx="7" cy="4.4" r="3.4" fill="none" stroke="#444" stroke-width="1"/><path d="M4.6 7 L0.8 10.8" stroke="#444" stroke-width="1.1" stroke-linecap="round"/></svg>
<svg style="left:679.8px;top:99.8px;" width="8" height="8" viewBox="0 0 8 8"><path d="M2.2 3.1 L4 4.9 L5.8 3.1" fill="none" stroke="#444" stroke-width="1.1" stroke-linecap="round" stroke-linejoin="round"/></svg>
<svg style="left:635.8px;top:116.8px;" width="11.6" height="11" viewBox="0 0 11.6 11"><path d="M6.8 0.8 L10.8 4.6 L5.4 10 L1 5.8 Z" fill="#e9b4ea" stroke="#a844ab" stroke-width="0.9"/><path d="M3.6 3.4 L7.8 7.4" stroke="#a844ab" stroke-width="0.8"/><path d="M3.6 3.4 L6.8 0.8 L10.8 4.6 L7.8 7.4 Z" fill="#fff" stroke="#a844ab" stroke-width="0.9"/></svg>
<svg style="left:649.8px;top:118.6px;" width="8" height="8" viewBox="0 0 8 8"><path d="M2.2 3.1 L4 4.9 L5.8 3.1" fill="none" stroke="#444" stroke-width="1.1" stroke-linecap="round" stroke-linejoin="round"/></svg>
<span class="t" style="top:132px;height:14px;line-height:14px;font-size:8.4px;color:#3b3b3b;left:653.80px;transform:scaleX(0.9970);">編集</span>
<div style="left:696.7px;top:77px;width:1px;height:64px;background:#dcdcdc;"></div>
<svg style="left:708px;top:79.4px;" width="21" height="20.4" viewBox="0 0 21 20.4"><rect x="0.6" y="0.6" width="19.8" height="19.2" rx="1.2" fill="#fbeee9" stroke="#d4876a" stroke-width="1.1"/><rect x="3.2" y="3" width="6" height="5.8" fill="#fff" stroke="#d4876a" stroke-width="1.1"/><rect x="3.2" y="11.4" width="6" height="5.8" fill="#fff" stroke="#d4876a" stroke-width="1.1"/><rect x="11.8" y="3" width="6" height="5.8" fill="#fff" stroke="#d4876a" stroke-width="1.1"/><rect x="11.8" y="11.4" width="6" height="5.8" fill="#fff" stroke="#d4876a" stroke-width="1.1"/></svg>
<span class="t" style="top:102px;height:14px;line-height:14px;font-size:8.6px;color:#3b3b3b;left:711.90px;transform:scaleX(0.7441);">アド</span>
<span class="t" style="top:113px;height:14px;line-height:14px;font-size:8.6px;color:#3b3b3b;left:712.20px;transform:scaleX(0.7092);">イン</span>
<span class="t" style="top:132px;height:14px;line-height:14px;font-size:8.4px;color:#3b3b3b;left:705.60px;transform:scaleX(0.7582);">アドイン</span>
<div style="left:738.3px;top:77px;width:1px;height:64px;background:#dcdcdc;"></div>
<svg style="left:749px;top:79.4px;" width="21" height="20.4" viewBox="0 0 21 20.4"><rect x="0.6" y="0.6" width="19.8" height="19.2" fill="#f4f4f4" stroke="#777" stroke-width="1"/><path d="M0.6 3 H20.4 M0.6 14 H20.4 M5.6 14 V19.8 M10.6 14 V19.8 M15.6 14 V19.8" stroke="#888" stroke-width="0.7"/><circle cx="9.4" cy="8.8" r="5.6" fill="#fff" stroke="#666" stroke-width="1"/><rect x="6.6" y="8" width="2" height="3.4" fill="#9a9a9a"/><rect x="8.8" y="6.6" width="2" height="4.8" fill="#666"/><rect x="11" y="5.6" width="1.8" height="5.8" fill="#2a7fc1"/><path d="M13.6 12.8 L19.6 18.8" stroke="#666" stroke-width="1.2"/></svg>
<span class="t" style="top:102px;height:14px;line-height:14px;font-size:8.6px;color:#3b3b3b;left:750.00px;transform:scaleX(0.7753);">データ</span>
<span class="t" style="top:113px;height:14px;line-height:14px;font-size:8.6px;color:#3b3b3b;left:751.40px;transform:scaleX(0.9475);">分析</span>
<svg style="left:781px;top:79.4px;" width="23" height="20.4" viewBox="0 0 23 20.4"><path d="M6.4 1.2 H12.6 C14 1.2 14.8 2 14.4 3.4 L11.4 14.2 C11 15.6 10 16.2 8.6 16.2 H3 C1.4 16.2 0.6 15.2 1 13.8 L3.6 3.6 C4 2 5 1.2 6.4 1.2 Z" fill="#fff" stroke="#3fae6f" stroke-width="1.1"/><path d="M14.2 4.2 H19.8 C21.6 4.2 22.4 5.2 22 6.8 L19.4 16.8 C19 18.4 18 19.2 16.6 19.2 H10.4 C9 19.2 8.2 18.4 8.6 17 L11.6 6.2 C12 4.8 12.8 4.2 14.2 4.2 Z" fill="#f3f3f3" stroke="#3fae6f" stroke-width="1.1"/><path d="M12.4 1.4 L16 2 L18 4.2 L14.4 4.2 Z" fill="#8fd3ad" stroke="#3fae6f" stroke-width="0.6"/><path d="M10.6 19 L7 18.4 L5 16.2 L8.6 16.2 Z" fill="#8fd3ad" stroke="#3fae6f" stroke-width="0.6"/></svg>
<span class="t" style="top:101px;height:15px;line-height:15px;font-size:9.4px;color:#3b3b3b;left:777.50px;transform:scaleX(1.0004);">Copilot</span>
<div style="left:813.9px;top:77px;width:1px;height:64px;background:#dcdcdc;"></div>
<svg style="left:840.5px;top:88px;" width="19" height="13" viewBox="0 0 19 13"><path d="M2 6 V11.4 H6.4" fill="none" stroke="#5b8def" stroke-width="1" /><path d="M9 6.6 L11.4 4.2 C12.4 3.2 13.8 3.2 14.6 4 C15.4 4.8 15.4 6.2 14.4 7.2 L12.4 9.2 M11.6 6.8 L9.4 9 C8.4 10 8.4 11.4 9.2 12.2 C10 13 11.4 13 12.4 12 L13 11.4" fill="none" stroke="#4a7de0" stroke-width="1.2" stroke-linecap="round"/></svg>
<span class="t" style="top:102px;height:14px;line-height:14px;font-size:8.8px;color:#3b3b3b;left:823.00px;transform:scaleX(0.8907);">PDF を作成し</span>
<span class="t" style="top:113px;height:14px;line-height:14px;font-size:8.6px;color:#3b3b3b;left:823.60px;transform:scaleX(0.8010);">てリンクを共有</span>
<span class="t" style="top:132px;height:14px;line-height:14px;font-size:9.2px;color:#3b3b3b;left:816.00px;transform:scaleX(1.0285);">Adobe Acrobat</span>
<div style="left:879.4px;top:77px;width:1px;height:64px;background:#dcdcdc;"></div>
<svg style="left:952.4px;top:131.6px;" width="8" height="8" viewBox="0 0 8 8"><path d="M1.6 2.8 L4 5.2 L6.4 2.8" fill="none" stroke="#444" stroke-width="1.1" stroke-linecap="round" stroke-linejoin="round"/></svg>
<div style="left:57.8px;top:152px;width:71.4px;height:17.8px;background:#fdfdfd;border-radius:3px;"></div>
<span class="t" style="top:153px;height:15px;line-height:15px;font-size:10px;color:#333;left:60.70px;transform:scaleX(1.1220);">H23</span>
<svg style="left:118.3px;top:157px;" width="8" height="8" viewBox="0 0 8 8"><path d="M1.6 2.8 L4 5.2 L6.4 2.8" fill="none" stroke="#444" stroke-width="1.1" stroke-linecap="round" stroke-linejoin="round"/></svg>
<div style="left:136.8px;top:156.8px;width:1.3px;height:1.3px;background:#666;border-radius:50%;"></div>
<div style="left:136.8px;top:160px;width:1.3px;height:1.3px;background:#666;border-radius:50%;"></div>
<div style="left:136.8px;top:163.2px;width:1.3px;height:1.3px;background:#666;border-radius:50%;"></div>
<div style="left:145px;top:152px;width:60.4px;height:17.8px;background:#fdfdfd;border-radius:3px;"></div>
<svg style="left:149.5px;top:157.2px;" width="7" height="7" viewBox="0 0 7 7"><path d="M0.6 0.6 L6.4 6.4 M6.4 0.6 L0.6 6.4" stroke="#b5b5b5" stroke-width="0.9"/></svg>
<svg style="left:165.6px;top:157.2px;" width="9" height="7" viewBox="0 0 9 7"><path d="M0.6 3.8 L3 6.2 L8.4 0.8" fill="none" stroke="#b5b5b5" stroke-width="0.9"/></svg>
<span class="t" style="top:152px;height:16px;line-height:16px;font-size:11.4px;color:#333;font-weight:700;font-family:'Liberation Serif','Noto Serif CJK SC',serif;left:184.35px;font-style:italic;letter-spacing:-0.5px;">fx</span>
<svg style="left:196.4px;top:157px;" width="8" height="8" viewBox="0 0 8 8"><path d="M1.7999999999999998 2.9 L4 5.1 L6.2 2.9" fill="none" stroke="#999" stroke-width="0.9" stroke-linecap="round" stroke-linejoin="round"/></svg>
<div style="left:209px;top:152px;width:757px;height:17.8px;background:#fdfdfd;border-radius:3px;"></div>
<svg style="left:956px;top:156.6px;" width="8" height="8" viewBox="0 0 8 8"><path d="M1.6 2.8 L4 5.2 L6.4 2.8" fill="none" stroke="#444" stroke-width="1.1" stroke-linecap="round" stroke-linejoin="round"/></svg>
<div style="left:51px;top:173.5px;width:655.2px;height:14.6px;background:#f1f1f1;"></div>
<div style="left:51px;top:173.5px;width:29.8px;height:346.3px;background:#f1f1f1;"></div>
<svg style="left:80.6px;top:187.9px;overflow:hidden;" width="625.6" height="331.9" viewBox="0 0 625.6 331.9"><rect x="0" y="0" width="625.6" height="331.9" fill="#fff"/><path d="M73 0 V331.9" stroke="#e7e7e7" stroke-width="0.8"/><path d="M146 0 V331.9" stroke="#e7e7e7" stroke-width="0.8"/><path d="M219 0 V331.9" stroke="#e7e7e7" stroke-width="0.8"/><path d="M292 0 V331.9" stroke="#e7e7e7" stroke-width="0.8"/><path d="M365 0 V331.9" stroke="#e7e7e7" stroke-width="0.8"/><path d="M438 0 V331.9" stroke="#e7e7e7" stroke-width="0.8"/><path d="M511 0 V331.9" stroke="#e7e7e7" stroke-width="0.8"/><path d="M584 0 V331.9" stroke="#e7e7e7" stroke-width="0.8"/><path d="M0 12.5 H625.6" stroke="#e7e7e7" stroke-width="0.8"/><path d="M0 25 H625.6" stroke="#e7e7e7" stroke-width="0.8"/><path d="M0 37.5 H625.6" stroke="#e7e7e7" stroke-width="0.8"/><path d="M0 50 H625.6" stroke="#e7e7e7" stroke-width="0.8"/><path d="M0 62.5 H625.6" stroke="#e7e7e7" stroke-width="0.8"/><path d="M0 75 H625.6" stroke="#e7e7e7" stroke-width="0.8"/><path d="M0 87.5 H625.6" stroke="#e7e7e7" stroke-width="0.8"/><path d="M0 100 H625.6" stroke="#e7e7e7" stroke-width="0.8"/><path d="M0 112.5 H625.6" stroke="#e7e7e7" stroke-width="0.8"/><path d="M0 125 H625.6" stroke="#e7e7e7" stroke-width="0.8"/><path d="M0 137.5 H625.6" stroke="#e7e7e7" stroke-width="0.8"/><path d="M0 150 H625.6" stroke="#e7e7e7" stroke-width="0.8"/><path d="M0 162.5 H625.6" stroke="#e7e7e7" stroke-width="0.8"/><path d="M0 175 H625.6" stroke="#e7e7e7" stroke-width="0.8"/><path d="M0 187.5 H625.6" stroke="#e7e7e7" stroke-width="0.8"/><path d="M0 200 H625.6" stroke="#e7e7e7" stroke-width="0.8"/><path d="M0 212.5 H625.6" stroke="#e7e7e7" stroke-width="0.8"/><path d="M0 225 H625.6" stroke="#e7e7e7" stroke-width="0.8"/><path d="M0 237.5 H625.6" stroke="#e7e7e7" stroke-width="0.8"/><path d="M0 250 H625.6" stroke="#e7e7e7" stroke-width="0.8"/><path d="M0 262.5 H625.6" stroke="#e7e7e7" stroke-width="0.8"/><path d="M0 275 H625.6" stroke="#e7e7e7" stroke-width="0.8"/><path d="M0 287.5 H625.6" stroke="#e7e7e7" stroke-width="0.8"/><path d="M0 300 H625.6" stroke="#e7e7e7" stroke-width="0.8"/><path d="M0 312.5 H625.6" stroke="#e7e7e7" stroke-width="0.8"/><path d="M0 325 H625.6" stroke="#e7e7e7" stroke-width="0.8"/></svg>
<span class="t" style="top:174px;height:18px;line-height:18px;font-size:12.4px;color:#555;left:112.97px;">A</span>
<span class="t" style="top:174px;height:18px;line-height:18px;font-size:12.4px;color:#555;left:185.97px;">B</span>
<div style="left:153.1px;top:177px;width:1px;height:11px;background:#e4e4e4;"></div>
<span class="t" style="top:174px;height:18px;line-height:18px;font-size:12.4px;color:#555;left:258.62px;">C</span>
<div style="left:226.1px;top:177px;width:1px;height:11px;background:#e4e4e4;"></div>
<span class="t" style="top:174px;height:18px;line-height:18px;font-size:12.4px;color:#555;left:331.62px;">D</span>
<div style="left:299.1px;top:177px;width:1px;height:11px;background:#e4e4e4;"></div>
<span class="t" style="top:174px;height:18px;line-height:18px;font-size:12.4px;color:#555;left:404.97px;">E</span>
<div style="left:372.1px;top:177px;width:1px;height:11px;background:#e4e4e4;"></div>
<span class="t" style="top:174px;height:18px;line-height:18px;font-size:12.4px;color:#555;left:478.31px;">F</span>
<div style="left:445.1px;top:177px;width:1px;height:11px;background:#e4e4e4;"></div>
<span class="t" style="top:174px;height:18px;line-height:18px;font-size:12.4px;color:#555;left:550.28px;">G</span>
<div style="left:518.1px;top:177px;width:1px;height:11px;background:#e4e4e4;"></div>
<div style="left:591.6px;top:175.6px;width:73px;height:12.4px;background:#d6d6d6;border-bottom:1.4px solid #1e7145;"></div>
<span class="t" style="top:174px;height:18px;line-height:18px;font-size:12.4px;color:#1e7145;left:623.62px;">H</span>
<div style="left:591.1px;top:177px;width:1px;height:11px;background:#e4e4e4;"></div>
<span class="t" style="top:174px;height:18px;line-height:18px;font-size:12.4px;color:#555;font-family:'Liberation Serif','Noto Serif CJK SC',serif;left:698.93px;">I</span>
<div style="left:664.1px;top:177px;width:1px;height:11px;background:#e4e4e4;"></div>
<svg style="left:71px;top:179px;" width="8.4" height="7" viewBox="0 0 8.4 7"><path d="M8.2 0 V6.8 H0.4 Z" fill="#d9d9d9"/></svg>
<span class="t" style="top:186px;height:18px;line-height:18px;font-size:12.4px;color:#5c5c5c;left:62.15px;">1</span>
<span class="t" style="top:199px;height:18px;line-height:18px;font-size:12.4px;color:#5c5c5c;left:62.15px;">2</span>
<span class="t" style="top:211px;height:18px;line-height:18px;font-size:12.4px;color:#5c5c5c;left:62.15px;">3</span>
<span class="t" style="top:224px;height:18px;line-height:18px;font-size:12.4px;color:#5c5c5c;left:62.15px;">4</span>
<span class="t" style="top:236px;height:18px;line-height:18px;font-size:12.4px;color:#5c5c5c;left:62.15px;">5</span>
<span class="t" style="top:249px;height:18px;line-height:18px;font-size:12.4px;color:#5c5c5c;left:62.15px;">6</span>
<span class="t" style="top:261px;height:18px;line-height:18px;font-size:12.4px;color:#5c5c5c;left:62.15px;">7</span>
<span class="t" style="top:274px;height:18px;line-height:18px;font-size:12.4px;color:#5c5c5c;left:62.15px;">8</span>
<span class="t" style="top:286px;height:18px;line-height:18px;font-size:12.4px;color:#5c5c5c;left:62.15px;">9</span>
<span class="t" style="top:299px;height:18px;line-height:18px;font-size:12.4px;color:#5c5c5c;left:58.70px;">10</span>
<span class="t" style="top:311px;height:18px;line-height:18px;font-size:12.4px;color:#5c5c5c;left:59.16px;">11</span>
<span class="t" style="top:324px;height:18px;line-height:18px;font-size:12.4px;color:#5c5c5c;left:58.70px;">12</span>
<span class="t" style="top:336px;height:18px;line-height:18px;font-size:12.4px;color:#5c5c5c;left:58.70px;">13</span>
<span class="t" style="top:349px;height:18px;line-height:18px;font-size:12.4px;color:#5c5c5c;left:58.70px;">14</span>
<span class="t" style="top:361px;height:18px;line-height:18px;font-size:12.4px;color:#5c5c5c;left:58.70px;">15</span>
<span class="t" style="top:374px;height:18px;line-height:18px;font-size:12.4px;color:#5c5c5c;left:58.70px;">16</span>
<span class="t" style="top:386px;height:18px;line-height:18px;font-size:12.4px;color:#5c5c5c;left:58.70px;">17</span>
<span class="t" style="top:399px;height:18px;line-height:18px;font-size:12.4px;color:#5c5c5c;left:58.70px;">18</span>
<span class="t" style="top:411px;height:18px;line-height:18px;font-size:12.4px;color:#5c5c5c;left:58.70px;">19</span>
<span class="t" style="top:424px;height:18px;line-height:18px;font-size:12.4px;color:#5c5c5c;left:58.70px;">20</span>
<span class="t" style="top:436px;height:18px;line-height:18px;font-size:12.4px;color:#5c5c5c;left:58.70px;">21</span>
<span class="t" style="top:449px;height:18px;line-height:18px;font-size:12.4px;color:#5c5c5c;left:58.70px;">22</span>
<div style="left:51px;top:462.9px;width:29.6px;height:12.5px;background:#d6d6d6;border-right:1.4px solid #1e7145;"></div>
<span class="t" style="top:461px;height:18px;line-height:18px;font-size:12.4px;color:#1e7145;left:58.70px;">23</span>
<span class="t" style="top:474px;height:18px;line-height:18px;font-size:12.4px;color:#5c5c5c;left:58.70px;">24</span>
<span class="t" style="top:486px;height:18px;line-height:18px;font-size:12.4px;color:#5c5c5c;left:58.70px;">25</span>
<span class="t" style="top:499px;height:18px;line-height:18px;font-size:12.4px;color:#5c5c5c;left:58.70px;">26</span>
<span class="t" style="top:511px;height:18px;line-height:18px;font-size:12.4px;color:#5c5c5c;left:58.70px;clip-path:inset(0 0 8.2px 0);">27</span>
<div style="left:80.6px;top:187.9px;width:219px;height:12.8px;background:#18a2c8;"></div>
<div style="left:80.6px;top:200.4px;width:219px;height:12.5px;background:#c9edf6;"></div>
<div style="left:80.6px;top:225.4px;width:219px;height:12.5px;background:#c9edf6;"></div>
<div style="left:80.6px;top:250.4px;width:219px;height:12.5px;background:#c9edf6;"></div>
<div style="left:80.6px;top:275.4px;width:219px;height:12.5px;background:#c9edf6;"></div>
<div style="left:80.6px;top:300.4px;width:219px;height:12.5px;background:#c9edf6;"></div>
<div style="left:80.6px;top:325.4px;width:219px;height:12.5px;background:#c9edf6;"></div>
<div style="left:80.6px;top:350.4px;width:219px;height:12.5px;background:#c9edf6;"></div>
<div style="left:80.6px;top:375.4px;width:219px;height:12.5px;background:#c9edf6;"></div>
<div style="left:80.6px;top:400.4px;width:219px;height:12.5px;background:#c9edf6;"></div>
<svg style="left:80.6px;top:187.9px;" width="219" height="237.5" viewBox="0 0 219 237.5"><path d="M0 12.5 H219" stroke="#3f4f55" stroke-width="0.8" opacity="0.8"/><path d="M0 25 H219" stroke="#3f4f55" stroke-width="0.8" opacity="0.8"/><path d="M0 37.5 H219" stroke="#3f4f55" stroke-width="0.8" opacity="0.8"/><path d="M0 50 H219" stroke="#3f4f55" stroke-width="0.8" opacity="0.8"/><path d="M0 62.5 H219" stroke="#3f4f55" stroke-width="0.8" opacity="0.8"/><path d="M0 75 H219" stroke="#3f4f55" stroke-width="0.8" opacity="0.8"/><path d="M0 87.5 H219" stroke="#3f4f55" stroke-width="0.8" opacity="0.8"/><path d="M0 100 H219" stroke="#3f4f55" stroke-width="0.8" opacity="0.8"/><path d="M0 112.5 H219" stroke="#3f4f55" stroke-width="0.8" opacity="0.8"/><path d="M0 125 H219" stroke="#3f4f55" stroke-width="0.8" opacity="0.8"/><path d="M0 137.5 H219" stroke="#3f4f55" stroke-width="0.8" opacity="0.8"/><path d="M0 150 H219" stroke="#3f4f55" stroke-width="0.8" opacity="0.8"/><path d="M0 162.5 H219" stroke="#3f4f55" stroke-width="0.8" opacity="0.8"/><path d="M0 175 H219" stroke="#3f4f55" stroke-width="0.8" opacity="0.8"/><path d="M0 187.5 H219" stroke="#3f4f55" stroke-width="0.8" opacity="0.8"/><path d="M0 200 H219" stroke="#3f4f55" stroke-width="0.8" opacity="0.8"/><path d="M0 212.5 H219" stroke="#3f4f55" stroke-width="0.8" opacity="0.8"/><path d="M0 225 H219" stroke="#3f4f55" stroke-width="0.8" opacity="0.8"/><path d="M0 237.5 H219" stroke="#3f4f55" stroke-width="0.8" opacity="0.8"/><path d="M73 0 V237.5" stroke="#3f4f55" stroke-width="0.8" opacity="0.7"/><path d="M146 0 V237.5" stroke="#3f4f55" stroke-width="0.8" opacity="0.7"/><path d="M0 0 V237.5 M219 0 V237.5" stroke="#3f4f55" stroke-width="0.7" opacity="0.45"/></svg>
<span class="t" style="top:186px;height:16px;line-height:16px;font-size:10.6px;color:#fff;font-weight:500;left:83.70px;transform:scaleX(1.0698);">顧客ID</span>
<span class="t" style="top:186px;height:16px;line-height:16px;font-size:10.6px;color:#fff;font-weight:500;left:156.60px;transform:scaleX(1.0698);">商品ID</span>
<span class="t" style="top:186px;height:16px;line-height:16px;font-size:10.6px;color:#fff;font-weight:500;left:253.40px;transform:scaleX(0.9628);">数量</span>
<div style="left:142px;top:188.6px;width:10.8px;height:11.3px;background:#fdfdfd;border:0.5px solid #c8c8c8;"></div>
<svg style="left:145.2px;top:193.1px;" width="4.4" height="2.6" viewBox="0 0 4.4 2.6"><path d="M0.4 0 H4 L2.2 2.2 Z" fill="#6a6a6a"/></svg>
<div style="left:215px;top:188.6px;width:10.8px;height:11.3px;background:#fdfdfd;border:0.5px solid #c8c8c8;"></div>
<svg style="left:218.2px;top:193.1px;" width="4.4" height="2.6" viewBox="0 0 4.4 2.6"><path d="M0.4 0 H4 L2.2 2.2 Z" fill="#6a6a6a"/></svg>
<div style="left:288px;top:188.6px;width:10.8px;height:11.3px;background:#fdfdfd;border:0.5px solid #c8c8c8;"></div>
<svg style="left:291.2px;top:193.1px;" width="4.4" height="2.6" viewBox="0 0 4.4 2.6"><path d="M0.4 0 H4 L2.2 2.2 Z" fill="#6a6a6a"/></svg>
<span class="t" style="top:199px;height:18px;line-height:18px;font-size:12.6px;color:#454545;left:121.50px;transform:scaleX(1.0417);">1001</span>
<span class="t" style="top:199px;height:18px;line-height:18px;font-size:12.6px;color:#454545;left:201.80px;transform:scaleX(1.0421);">201</span>
<span class="t" style="top:199px;height:18px;line-height:18px;font-size:12.6px;color:#454545;left:282.10px;transform:scaleX(1.0417);">10</span>
<span class="t" style="top:211px;height:18px;line-height:18px;font-size:12.6px;color:#454545;left:121.50px;transform:scaleX(1.0417);">1002</span>
<span class="t" style="top:211px;height:18px;line-height:18px;font-size:12.6px;color:#454545;left:201.80px;transform:scaleX(1.0421);">202</span>
<span class="t" style="top:211px;height:18px;line-height:18px;font-size:12.6px;color:#454545;left:282.10px;transform:scaleX(1.0417);">20</span>
<span class="t" style="top:224px;height:18px;line-height:18px;font-size:12.6px;color:#454545;left:121.50px;transform:scaleX(1.0417);">1001</span>
<span class="t" style="top:224px;height:18px;line-height:18px;font-size:12.6px;color:#454545;left:201.80px;transform:scaleX(1.0421);">203</span>
<span class="t" style="top:224px;height:18px;line-height:18px;font-size:12.6px;color:#454545;left:274.80px;transform:scaleX(1.0421);">100</span>
<span class="t" style="top:236px;height:18px;line-height:18px;font-size:12.6px;color:#454545;left:121.50px;transform:scaleX(1.0417);">1001</span>
<span class="t" style="top:236px;height:18px;line-height:18px;font-size:12.6px;color:#454545;left:201.80px;transform:scaleX(1.0421);">202</span>
<span class="t" style="top:236px;height:18px;line-height:18px;font-size:12.6px;color:#454545;left:282.10px;transform:scaleX(1.0417);">30</span>
<span class="t" style="top:249px;height:18px;line-height:18px;font-size:12.6px;color:#454545;left:121.50px;transform:scaleX(1.0417);">1002</span>
<span class="t" style="top:249px;height:18px;line-height:18px;font-size:12.6px;color:#454545;left:201.80px;transform:scaleX(1.0421);">201</span>
<span class="t" style="top:249px;height:18px;line-height:18px;font-size:12.6px;color:#454545;left:282.10px;transform:scaleX(1.0417);">60</span>
<span class="t" style="top:261px;height:18px;line-height:18px;font-size:12.6px;color:#454545;left:121.50px;transform:scaleX(1.0417);">1001</span>
<span class="t" style="top:261px;height:18px;line-height:18px;font-size:12.6px;color:#454545;left:201.80px;transform:scaleX(1.0421);">202</span>
<span class="t" style="top:261px;height:18px;line-height:18px;font-size:12.6px;color:#454545;left:282.10px;transform:scaleX(1.0417);">70</span>
<span class="t" style="top:274px;height:18px;line-height:18px;font-size:12.6px;color:#454545;left:121.50px;transform:scaleX(1.0417);">1003</span>
<span class="t" style="top:274px;height:18px;line-height:18px;font-size:12.6px;color:#454545;left:201.80px;transform:scaleX(1.0421);">204</span>
<span class="t" style="top:274px;height:18px;line-height:18px;font-size:12.6px;color:#454545;left:274.80px;transform:scaleX(1.0421);">150</span>
<span class="t" style="top:286px;height:18px;line-height:18px;font-size:12.6px;color:#454545;left:121.50px;transform:scaleX(1.0417);">1001</span>
<span class="t" style="top:286px;height:18px;line-height:18px;font-size:12.6px;color:#454545;left:201.80px;transform:scaleX(1.0421);">201</span>
<span class="t" style="top:286px;height:18px;line-height:18px;font-size:12.6px;color:#454545;left:282.10px;transform:scaleX(1.0417);">20</span>
<span class="t" style="top:299px;height:18px;line-height:18px;font-size:12.6px;color:#454545;left:121.50px;transform:scaleX(1.0417);">1002</span>
<span class="t" style="top:299px;height:18px;line-height:18px;font-size:12.6px;color:#454545;left:201.80px;transform:scaleX(1.0421);">204</span>
<span class="t" style="top:299px;height:18px;line-height:18px;font-size:12.6px;color:#454545;left:282.10px;transform:scaleX(1.0417);">30</span>
<span class="t" style="top:311px;height:18px;line-height:18px;font-size:12.6px;color:#454545;left:121.50px;transform:scaleX(1.0417);">1004</span>
<span class="t" style="top:311px;height:18px;line-height:18px;font-size:12.6px;color:#454545;left:201.80px;transform:scaleX(1.0421);">201</span>
<span class="t" style="top:311px;height:18px;line-height:18px;font-size:12.6px;color:#454545;left:282.10px;transform:scaleX(1.0417);">60</span>
<span class="t" style="top:324px;height:18px;line-height:18px;font-size:12.6px;color:#454545;left:121.50px;transform:scaleX(1.0417);">1001</span>
<span class="t" style="top:324px;height:18px;line-height:18px;font-size:12.6px;color:#454545;left:201.80px;transform:scaleX(1.0421);">204</span>
<span class="t" style="top:324px;height:18px;line-height:18px;font-size:12.6px;color:#454545;left:282.10px;transform:scaleX(1.0417);">80</span>
<span class="t" style="top:336px;height:18px;line-height:18px;font-size:12.6px;color:#454545;left:121.50px;transform:scaleX(1.0417);">1004</span>
<span class="t" style="top:336px;height:18px;line-height:18px;font-size:12.6px;color:#454545;left:201.80px;transform:scaleX(1.0421);">203</span>
<span class="t" style="top:336px;height:18px;line-height:18px;font-size:12.6px;color:#454545;left:282.10px;transform:scaleX(1.0417);">90</span>
<span class="t" style="top:349px;height:18px;line-height:18px;font-size:12.6px;color:#454545;left:121.50px;transform:scaleX(1.0417);">1003</span>
<span class="t" style="top:349px;height:18px;line-height:18px;font-size:12.6px;color:#454545;left:201.80px;transform:scaleX(1.0421);">201</span>
<span class="t" style="top:349px;height:18px;line-height:18px;font-size:12.6px;color:#454545;left:282.10px;transform:scaleX(1.0417);">20</span>
<span class="t" style="top:361px;height:18px;line-height:18px;font-size:12.6px;color:#454545;left:121.50px;transform:scaleX(1.0417);">1004</span>
<span class="t" style="top:361px;height:18px;line-height:18px;font-size:12.6px;color:#454545;left:201.80px;transform:scaleX(1.0421);">203</span>
<span class="t" style="top:361px;height:18px;line-height:18px;font-size:12.6px;color:#454545;left:274.80px;transform:scaleX(1.0421);">100</span>
<span class="t" style="top:374px;height:18px;line-height:18px;font-size:12.6px;color:#454545;left:121.50px;transform:scaleX(1.0417);">1002</span>
<span class="t" style="top:374px;height:18px;line-height:18px;font-size:12.6px;color:#454545;left:201.80px;transform:scaleX(1.0421);">201</span>
<span class="t" style="top:374px;height:18px;line-height:18px;font-size:12.6px;color:#454545;left:274.80px;transform:scaleX(1.0421);">200</span>
<span class="t" style="top:386px;height:18px;line-height:18px;font-size:12.6px;color:#454545;left:121.50px;transform:scaleX(1.0417);">1004</span>
<span class="t" style="top:386px;height:18px;line-height:18px;font-size:12.6px;color:#454545;left:201.80px;transform:scaleX(1.0421);">203</span>
<span class="t" style="top:386px;height:18px;line-height:18px;font-size:12.6px;color:#454545;left:274.80px;transform:scaleX(1.0421);">120</span>
<span class="t" style="top:399px;height:18px;line-height:18px;font-size:12.6px;color:#454545;left:121.50px;transform:scaleX(1.0417);">1003</span>
<span class="t" style="top:399px;height:18px;line-height:18px;font-size:12.6px;color:#454545;left:201.80px;transform:scaleX(1.0421);">203</span>
<span class="t" style="top:399px;height:18px;line-height:18px;font-size:12.6px;color:#454545;left:282.10px;transform:scaleX(1.0417);">30</span>
<span class="t" style="top:411px;height:18px;line-height:18px;font-size:12.6px;color:#454545;left:121.50px;transform:scaleX(1.0417);">1004</span>
<span class="t" style="top:411px;height:18px;line-height:18px;font-size:12.6px;color:#454545;left:201.80px;transform:scaleX(1.0421);">204</span>
<span class="t" style="top:411px;height:18px;line-height:18px;font-size:12.6px;color:#454545;left:282.10px;transform:scaleX(1.0417);">40</span>
<svg style="left:296.2px;top:421.8px;" width="3.2" height="3.2" viewBox="0 0 3.2 3.2"><path d="M3.2 0 V3.2 H0 Z" fill="#2b4a8c"/></svg>
<div style="left:591px;top:462.1px;width:74.6px;height:14.3px;border:1.3px solid #1e7145;background:#fff;"></div>
<div style="left:663.4px;top:474px;width:3px;height:3px;background:#1e7145;"></div>
<div style="left:706.2px;top:173.5px;width:14.6px;height:346.3px;background:#f1f3f4;"></div>
<svg style="left:709.6px;top:179px;" width="8" height="5" viewBox="0 0 8 5"><path d="M0.4 4.6 L4 0.4 L7.6 4.6 Z" fill="#6b6b6b"/></svg>
<div style="left:711px;top:188.4px;width:5.2px;height:315px;background:#707070;border-radius:2.6px;"></div>
<svg style="left:709.6px;top:512.4px;" width="8" height="5" viewBox="0 0 8 5"><path d="M0.4 0.4 L4 4.6 L7.6 0.4 Z" fill="#6b6b6b"/></svg>
<div style="left:51px;top:519.8px;width:670px;height:22.4px;background:#e4ebed;"></div>
<svg style="left:67px;top:526.5px;" width="6" height="8" viewBox="0 0 6 8"><path d="M4.6 0.8 L1.2 4 L4.6 7.2" fill="none" stroke="#9a9a9a" stroke-width="1"/></svg>
<svg style="left:91px;top:526.5px;" width="6" height="8" viewBox="0 0 6 8"><path d="M1.4 0.8 L4.8 4 L1.4 7.2" fill="none" stroke="#9a9a9a" stroke-width="1"/></svg>
<div style="left:131px;top:519.6px;width:57.6px;height:20.4px;background:#fdfdfd;border-radius:0 0 5px 5px;"></div>
<svg style="left:127px;top:519.6px;" width="4" height="4" viewBox="0 0 4 4"><path d="M4 0 V4 C4 1.8 2.2 0 0 0 Z" fill="#fdfdfd"/></svg>
<svg style="left:188.6px;top:519.6px;" width="4" height="4" viewBox="0 0 4 4"><path d="M0 0 V4 C0 1.8 1.8 0 4 0 Z" fill="#fdfdfd"/></svg>
<span class="t" style="top:522px;height:15px;line-height:15px;font-size:10.2px;color:#2d6a48;left:137.80px;transform:scaleX(0.8717);">販売データ</span>
<div style="left:137.8px;top:535.8px;width:44.4px;height:1.4px;background:#1e7145;border-radius:1px;"></div>
<span class="t" style="top:524px;height:15px;line-height:15px;font-size:10.4px;color:#333;left:201.50px;transform:scaleX(0.8315);">商品マスタ</span>
<div style="left:252.9px;top:525px;width:1px;height:12px;background:#d0d6d8;"></div>
<span class="t" style="top:524px;height:15px;line-height:15px;font-size:10.4px;color:#333;left:262.80px;transform:scaleX(0.8373);">顧客マスタ</span>
<div style="left:314.5px;top:525px;width:1px;height:12px;background:#d0d6d8;"></div>
<svg style="left:346px;top:526.5px;" width="8" height="8" viewBox="0 0 8 8"><path d="M4 0.6 V7.4 M0.6 4 H7.4" stroke="#444" stroke-width="1"/></svg>
<div style="left:454.4px;top:528px;width:1.3px;height:1.3px;background:#555;border-radius:50%;"></div>
<div style="left:454.4px;top:530.8px;width:1.3px;height:1.3px;background:#555;border-radius:50%;"></div>
<div style="left:454.4px;top:533.6px;width:1.3px;height:1.3px;background:#555;border-radius:50%;"></div>
<div style="left:466px;top:523.4px;width:241px;height:15.6px;background:#edf2f3;border-radius:7.8px;"></div>
<svg style="left:470.4px;top:527.6px;" width="5" height="7" viewBox="0 0 5 7"><path d="M4.6 0.4 L0.4 3.5 L4.6 6.6 Z" fill="#6b6b6b"/></svg>
<div style="left:479.4px;top:528.2px;width:203.6px;height:5.8px;background:#707070;border-radius:2.9px;"></div>
<svg style="left:698px;top:527.6px;" width="5" height="7" viewBox="0 0 5 7"><path d="M0.4 0.4 L4.6 3.5 L0.4 6.6 Z" fill="#6b6b6b"/></svg>
<div style="left:51px;top:542.2px;width:922px;height:16.6px;background:#f2f3f3;"></div>
<span class="t" style="top:544px;height:14px;line-height:14px;font-size:8.6px;color:#444;left:58.80px;transform:scaleX(0.9799);">準備完了</span>
<svg style="left:107px;top:545.4px;" width="10" height="11" viewBox="0 0 10 11"><circle cx="4.4" cy="1.6" r="1.2" fill="none" stroke="#444" stroke-width="0.8"/><path d="M0.6 3.8 H8.2 M4.4 3.8 V6.4 M4.4 6.4 L2.2 10 M4.4 6.4 L5.4 8" fill="none" stroke="#444" stroke-width="0.8"/><path d="M6 7.4 L9.2 10.4 M9.2 7.4 L6 10.4" stroke="#444" stroke-width="0.9"/></svg>
<span class="t" style="top:544px;height:14px;line-height:14px;font-size:8.8px;color:#333;font-weight:700;left:119.70px;transform:scaleX(0.8638);">アクセシビリティ: 検討が必要です</span>
<svg style="left:693.4px;top:546px;" width="10" height="9.6" viewBox="0 0 10 9.6"><rect x="0.5" y="0.5" width="8.4" height="5.6" rx="0.6" fill="none" stroke="#444" stroke-width="0.9"/><circle cx="7" cy="7" r="2" fill="#f2f3f3" stroke="#444" stroke-width="0.9"/><circle cx="7" cy="7" r="0.6" fill="#444"/></svg>
<span class="t" style="top:544px;height:14px;line-height:14px;font-size:8.6px;color:#444;left:706.20px;transform:scaleX(0.9974);">表示設定</span>
<div style="left:754px;top:542.8px;width:27.4px;height:16px;background:#dfdfdf;"></div>
<svg style="left:762.6px;top:546px;" width="9.6" height="9.2" viewBox="0 0 9.6 9.2"><rect x="0.5" y="0.5" width="8.6" height="8.2" fill="none" stroke="#333" stroke-width="0.9"/><path d="M3.4 0.5 V8.7 M6.2 0.5 V8.7 M0.5 3.2 H9.1 M0.5 6 H9.1" stroke="#333" stroke-width="0.8"/></svg>
<svg style="left:791.8px;top:546px;" width="9.6" height="9.2" viewBox="0 0 9.6 9.2"><rect x="0.5" y="0.5" width="8.6" height="8.2" fill="none" stroke="#444" stroke-width="0.9"/><rect x="2.4" y="2.4" width="4.8" height="4.4" fill="none" stroke="#444" stroke-width="0.8"/></svg>
<svg style="left:820.2px;top:546px;" width="9.6" height="9.2" viewBox="0 0 9.6 9.2"><rect x="0.5" y="0.5" width="8.6" height="8.2" fill="none" stroke="#444" stroke-width="0.9"/><path d="M0.5 5 H4 V0.5 M4 3 H9.1" fill="none" stroke="#444" stroke-width="0.8"/></svg>
<div style="left:844px;top:550.6px;width:4.6px;height:0.9px;background:#555;"></div>
<div style="left:853px;top:550.7px;width:71.2px;height:0.8px;background:#777;"></div>
<div style="left:887.3px;top:546px;width:3.4px;height:10px;background:#555;border-radius:1px;"></div>
<svg style="left:927.8px;top:548.4px;" width="5.4" height="5.4" viewBox="0 0 5.4 5.4"><path d="M2.7 0.3 V5.1 M0.3 2.7 H5.1" stroke="#555" stroke-width="0.9"/></svg>
<span class="t" style="top:544px;height:14px;line-height:14px;font-size:8.8px;color:#444;left:943.00px;transform:scaleX(1.0756);">100%</span>
<div style="left:721px;top:173.5px;width:252px;height:368.8px;background:#f1f0ef;"></div>
<svg style="left:729.8px;top:183.2px;" width="15.8" height="14.8" viewBox="0 0 15.8 14.8"><defs><linearGradient id="cg1" x1="0.3" y1="0" x2="0.1" y2="1"><stop offset="0" stop-color="#1f6fd8"/><stop offset="0.35" stop-color="#1ea7c4"/><stop offset="0.65" stop-color="#4cc463"/><stop offset="1" stop-color="#f0d23a"/></linearGradient><linearGradient id="cg2" x1="0.7" y1="0" x2="0.4" y2="1"><stop offset="0" stop-color="#9a55e0"/><stop offset="0.45" stop-color="#e0489a"/><stop offset="0.8" stop-color="#f0653a"/><stop offset="1" stop-color="#e8402a"/></linearGradient></defs><path d="M4.4 1.2 C5 0.4 5.8 0.2 6.8 0.2 H10.2 C11.6 0.2 12.2 1.2 11.8 2.6 L9.6 9 C9.2 10 8.4 10.6 7.4 10.6 H2.4 C0.6 10.6 -0.2 9.4 0.4 7.6 L2.2 3.4 C2.8 2.2 3.6 1.6 4.4 1.2 Z" fill="url(#cg1)"/><path d="M8.8 4 H13.4 C15.2 4 16 5.2 15.4 7 L13.6 11.8 C13 13.4 12 14.6 10 14.6 H6.8 C5 14.6 4 13.6 4.6 12 L5.4 10.4 H7.2 C8.4 10.4 9 9.8 9.4 8.8 L11 4.4 Z" fill="url(#cg2)"/><path d="M8.6 4.6 L6.6 10.2 L7.4 10.2 L9.4 4.6 Z" fill="#fff" opacity="0.85"/></svg>
<span class="t" style="top:181px;height:21px;line-height:21px;font-size:15px;color:#2b2b2b;left:750.80px;transform:scaleX(0.9327);">Copilot (プレビュー版)</span>
<svg style="left:929.8px;top:188.2px;" width="8" height="8" viewBox="0 0 8 8"><path d="M0 2.0 L4 6.0 L8 2.0" fill="none" stroke="#444" stroke-width="1.1" stroke-linecap="round" stroke-linejoin="round"/></svg>
<svg style="left:953.4px;top:188.4px;" width="7.6" height="7.6" viewBox="0 0 7.6 7.6"><path d="M0.5 0.5 L7.1 7.1 M7.1 0.5 L0.5 7.1" stroke="#444" stroke-width="1.1"/></svg>
<div style="left:741.4px;top:214.2px;width:204px;height:210px;background:#fdfdfd;box-shadow:0 0 2px rgba(0,0,0,0.12);"></div>
<span class="t" style="top:207px;height:15px;line-height:15px;font-size:10px;color:#686868;left:750.60px;transform:scaleX(1.0156);clip-path:inset(7.6px 0 0 0);">これにより、販売データに単価が含まれ</span>
<span class="t" style="top:222px;height:15px;line-height:15px;font-size:10px;color:#686868;left:750.60px;transform:scaleX(1.0144);">るようになり、販売額を計算することが</span>
<span class="t" style="top:237px;height:15px;line-height:15px;font-size:10px;color:#686868;left:750.60px;transform:scaleX(1.0409);">できます。.</span>
<div style="left:749.5px;top:256.2px;width:187.2px;height:83.4px;background:#f8f8f8;border:0.8px solid #e3e3e3;border-radius:3px;overflow:hidden;"><div style="left:0;top:0;width:100%;height:22.2px;background:#f0f0f0;border-bottom:0.8px solid #e3e3e3;"></div><div style="left:0;bottom:0;width:100%;height:17px;background:#f0f0f0;border-top:0.8px solid #e3e3e3;"></div></div>
<span class="t" style="top:261px;height:15px;line-height:15px;font-size:10.6px;color:#444;font-family:'Liberation Serif','Noto Serif CJK SC',serif;left:760.52px;font-style:italic;">f</span>
<span class="t" style="top:262px;height:14px;line-height:14px;font-size:8.4px;color:#444;left:763.51px;">x</span>
<svg style="left:916.8px;top:261.8px;" width="9.4" height="12" viewBox="0 0 9.4 12"><rect x="2.4" y="2.4" width="6.2" height="8.8" rx="1" fill="none" stroke="#555" stroke-width="1"/><path d="M2.2 9.6 H1.6 C1 9.6 0.6 9.2 0.6 8.6 V1.8 C0.6 1.1 1 0.6 1.7 0.6 H5.8 C6.4 0.6 6.8 0.9 6.8 1.5" fill="none" stroke="#555" stroke-width="0.9"/></svg>
<span class="t" style="top:289px;height:15px;line-height:15px;font-size:9.4px;color:#4a4a4a;font-family:'Liberation Mono','Noto Sans CJK JP',monospace;left:759.00px;transform:scaleX(1.0034);"><b>=XLOOKUP([@</b><span style="letter-spacing:0.85px;color:#5a5a5a">商品</span><b>ID],</b><span style="letter-spacing:0.85px;color:#5a5a5a">テーブル</span></span>
<span class="t" style="top:303px;height:15px;line-height:15px;font-size:9.4px;color:#4a4a4a;font-family:'Liberation Mono','Noto Sans CJK JP',monospace;left:759.00px;transform:scaleX(1.0066);"><b>25[</b><span style="letter-spacing:0.85px;color:#5a5a5a">商品</span><b>ID],</b><span style="letter-spacing:0.85px;color:#5a5a5a">テーブル</span><b>25[</b><span style="letter-spacing:0.85px;color:#5a5a5a">単価</span><b>])</b></span>
<span class="t" style="top:325px;height:14px;line-height:14px;font-size:8.6px;color:#555;left:869.80px;transform:scaleX(1.0004);">説明の表示</span>
<svg style="left:919px;top:327.6px;" width="8" height="8" viewBox="0 0 8 8"><path d="M0.7999999999999998 2.4 L4 5.6 L7.2 2.4" fill="none" stroke="#555" stroke-width="1" stroke-linecap="round" stroke-linejoin="round"/></svg>
<div style="left:750.3px;top:348px;width:185.8px;height:68.4px;background:#fff;border:0.8px solid #e0e0e0;border-radius:3px 3px 0 0;overflow:hidden;"><div style="left:0;top:0;width:100%;height:15.3px;background:#f5f5f5;"></div><div style="left:0;top:0;width:27px;height:100%;background:#f5f5f5;border-right:0.8px solid #e0e0e0;"></div><div style="left:27px;top:15.3px;right:0;height:14.5px;background:#e0e0e0;"></div><div style="left:0;top:14.9px;width:100%;height:0.8px;background:#e2e2e2;"></div><div style="left:0;top:29.45px;width:100%;height:0.8px;background:#e2e2e2;"></div><div style="left:0;top:44px;width:100%;height:0.8px;background:#e2e2e2;"></div><div style="left:0;top:58.55px;width:100%;height:0.8px;background:#e2e2e2;"></div><div style="left:0;top:73.1px;width:100%;height:0.8px;background:#e2e2e2;"></div></div>
<span class="t" style="top:349px;height:15px;line-height:15px;font-size:9.8px;color:#8a8a8a;left:852.96px;">D</span>
<span class="t" style="top:363px;height:15px;line-height:15px;font-size:9.6px;color:#777;left:760.93px;">1</span>
<span class="t" style="top:364px;height:14px;line-height:14px;font-size:8.6px;color:#333;font-weight:700;left:780.80px;transform:scaleX(0.9533);">単価</span>
<span class="t" style="top:378px;height:15px;line-height:15px;font-size:9.6px;color:#777;left:760.93px;">2</span>
<span class="t" style="top:378px;height:15px;line-height:15px;font-size:9.6px;color:#555;left:780.80px;">100</span>
<span class="t" style="top:392px;height:15px;line-height:15px;font-size:9.6px;color:#777;left:760.93px;">3</span>
<span class="t" style="top:392px;height:15px;line-height:15px;font-size:9.6px;color:#555;left:780.80px;">500</span>
<span class="t" style="top:407px;height:15px;line-height:15px;font-size:9.6px;color:#777;left:760.93px;clip-path:inset(0 0 4.4px 0);">4</span>
<span class="t" style="top:407px;height:15px;line-height:15px;font-size:9.6px;color:#555;left:780.80px;clip-path:inset(0 0 4.4px 0);">1000</span>
<div style="left:721px;top:414px;width:238px;height:12px;background:linear-gradient(to bottom, rgba(241,240,239,0) 0%, rgba(241,240,239,1) 70%);"></div>
<div style="left:721px;top:424px;width:252px;height:118px;background:#f1f0ef;"></div>
<div style="left:958.6px;top:332.6px;width:3.6px;height:45.2px;background:#4a4a4a;border-radius:1.8px;"></div>
<svg style="left:858.6px;top:328.2px;" width="12.6" height="15.4" viewBox="0 0 12.6 15.4"><path d="M3.8 9.4 V1.6 C3.8 0.2 5.8 0.2 5.8 1.6 V6 C5.8 4.8 7.6 4.8 7.6 6.2 C7.6 5.2 9.4 5.2 9.4 6.6 C9.4 5.8 11.2 5.8 11.2 7.2 V10.8 C11.2 13 10 14.8 8.2 14.8 H6.4 C5 14.8 4 14.2 3.4 13 L0.8 9.4 C0 8 1.6 7.2 2.6 8.2 Z" fill="#fff" stroke="#333" stroke-width="0.9" stroke-linejoin="round"/></svg>
<div style="left:745.3px;top:423.4px;width:176px;height:21px;background:#f3f3f2;border:0.8px solid #cfdcd4;border-radius:5.5px;"></div>
<span class="t" style="top:428px;height:14px;line-height:14px;font-size:9px;color:#444;left:751.00px;transform:scaleX(0.9621);">プロンプトに基づいて別の提案を受け取る</span>
<div style="left:927.5px;top:423.4px;width:22.6px;height:21px;background:#f3f3f2;border:0.8px solid #cfdcd4;border-radius:5.5px;"></div>
<svg style="left:934.4px;top:430px;" width="9" height="9" viewBox="0 0 9 9"><path d="M7.6 2.6 C6.4 0.6 3.4 0.2 1.8 2 C0.2 3.8 0.6 6.6 2.6 7.8 C4.4 8.8 6.8 8.2 7.8 6.2" fill="none" stroke="#444" stroke-width="1"/><path d="M8 0.4 V3 H5.4" fill="none" stroke="#444" stroke-width="1"/></svg>
<div style="left:741.5px;top:448px;width:211px;height:69.6px;background:#fdfdfd;border-radius:5px;box-shadow:0 0.5px 1.5px rgba(0,0,0,0.12);"></div>
<span class="t" style="top:457px;height:15px;line-height:15px;font-size:10px;color:#767676;left:747.80px;transform:scaleX(0.9926);">質問するか、A1:C19 に対して行う操作を入</span>
<span class="t" style="top:471px;height:15px;line-height:15px;font-size:10px;color:#767676;left:747.80px;transform:scaleX(1.0230);">力してください</span>
<svg style="left:877.6px;top:496.6px;" width="10.6" height="12.2" viewBox="0 0 10.6 12.2"><rect x="0.6" y="0.6" width="9.2" height="11" rx="1.2" fill="none" stroke="#444" stroke-width="1.1"/><rect x="2.4" y="2" width="5.6" height="2.8" fill="#666"/><path d="M0.6 9.4 H9.8" stroke="#444" stroke-width="0.9"/></svg>
<div style="left:893.8px;top:497px;width:1px;height:12px;background:#d8d8d8;"></div>
<svg style="left:905px;top:496.6px;" width="8" height="12" viewBox="0 0 8 12"><rect x="2.3" y="0.6" width="3.4" height="6.6" rx="1.7" fill="none" stroke="#444" stroke-width="0.9"/><path d="M0.8 5.4 C0.8 9.4 7.2 9.4 7.2 5.4 M4 8.6 V11" fill="none" stroke="#444" stroke-width="0.9"/></svg>
<svg style="left:929px;top:497.4px;" width="11" height="10.4" viewBox="0 0 11 10.4"><path d="M0.8 0.8 L10.2 5.2 L0.8 9.6 L2.4 5.2 Z M2.4 5.2 H6" fill="none" stroke="#c4c4c4" stroke-width="0.9" stroke-linejoin="round"/></svg>
<svg style="left:811.6px;top:0px;overflow:hidden;" width="161.2" height="89.9" viewBox="0 0 161.2 89.9"><defs><linearGradient id="wbg" x1="0" y1="0" x2="1" y2="0"><stop offset="0" stop-color="#1b2635"/><stop offset="0.3" stop-color="#1d2838"/><stop offset="0.6" stop-color="#172030"/><stop offset="1" stop-color="#0e1520"/></linearGradient><linearGradient id="skin" x1="0" y1="0" x2="1" y2="0"><stop offset="0" stop-color="#e9c4b2"/><stop offset="0.45" stop-color="#e2b6a2"/><stop offset="0.8" stop-color="#c8957e"/><stop offset="1" stop-color="#b07e69"/></linearGradient><linearGradient id="neck" x1="0" y1="0" x2="1" y2="0"><stop offset="0" stop-color="#d9a890"/><stop offset="1" stop-color="#a8745f"/></linearGradient><linearGradient id="shirt" x1="0" y1="0" x2="1" y2="0"><stop offset="0" stop-color="#f3f4f2"/><stop offset="0.7" stop-color="#eceeec"/><stop offset="1" stop-color="#d9dcda"/></linearGradient><filter id="soft" x="-5%" y="-5%" width="110%" height="110%"><feGaussianBlur stdDeviation="0.45"/></filter></defs><rect x="0" y="0" width="161.2" height="89.9" fill="url(#wbg)"/><g filter="url(#soft)"><rect x="126" y="86" width="35.19999999999999" height="4" fill="#5e4636"/><g fill="#1f4722"><ellipse cx="9" cy="35" rx="6" ry="5"/><ellipse cx="19" cy="31" rx="9" ry="6"/><ellipse cx="28" cy="36" rx="6.6" ry="5"/><ellipse cx="18" cy="39" rx="8" ry="4.4"/><ellipse cx="16" cy="52" rx="7.4" ry="4.6"/><ellipse cx="24" cy="53.6" rx="5.4" ry="3.6"/><ellipse cx="33" cy="67" rx="5.6" ry="6.4"/><ellipse cx="30" cy="72" rx="4" ry="3"/></g><g fill="#2f6d2e" opacity="0.9"><ellipse cx="17" cy="29.6" rx="4" ry="2.4"/><ellipse cx="25" cy="34" rx="3.6" ry="2"/><ellipse cx="10" cy="34" rx="3" ry="2"/><ellipse cx="16" cy="51" rx="3.6" ry="2"/><ellipse cx="33.6" cy="64.6" rx="2.6" ry="2.4"/><ellipse cx="20" cy="38" rx="3" ry="1.6"/></g><path d="M19.6 42 L19.2 72" stroke="#6e5c48" stroke-width="1.5"/><path d="M14.4 71.4 H25 L24.4 80.4 H15 Z" fill="#686c6e"/><path d="M25 75.6 H36 V82 H25 Z" fill="#e4e4e0"/><path d="M31.6 90 C35 80 42 73 50.6 69 L65.4 63.8 H96.4 L117.8 74.6 C124 78.6 127.4 83.4 129.4 90 Z" fill="url(#shirt)"/><path d="M65.4 64.6 C68 79 93 79.6 96.4 64.8" fill="none" stroke="#cdd0cc" stroke-width="1.2"/><path d="M68 50 H94.6 V65.4 C90 75.6 72 75.4 67 65.4 Z" fill="url(#neck)"/><path d="M63.2 30 C63 3 101.6 3 101.4 30 C101.8 42 98.6 51 93.6 56.4 C89.6 60.6 86 61.8 82.4 61.8 C78.6 61.8 75.2 60.6 71.2 56.4 C66 51 62.8 42 63.2 30 Z" fill="url(#skin)"/><ellipse cx="62.4" cy="38.6" rx="1.8" ry="4" fill="#d9a690"/><ellipse cx="102.2" cy="39" rx="1.8" ry="4" fill="#a87662"/><path d="M60.6 35.4 C58.6 27 59.2 17 63.8 11.4 C68.6 5.8 76 3.8 83.6 4.2 C93.2 4.6 100.8 9.6 104 17 C106.2 23 105.6 30.6 103.2 37 C102.6 34.6 102 33.4 101.4 32.6 C100.4 30 99.4 28.6 98 27.6 C96 23.6 94 21.4 91.6 19.8 C88 17 85 15.6 81.7 14.6 C78 13 75.6 12 73.5 10.8 C71 13.6 68.8 16.6 67 19.8 C65.2 23.6 64.2 27.4 63.7 31.2 C62.6 32.4 61.6 33.6 60.6 35.4 Z" fill="#2a2326"/><path d="M73.5 10.8 C78 8 86 7.4 93 10.4" fill="none" stroke="#43383b" stroke-width="0.9"/><g fill="rgba(60,50,50,0.04)" stroke="#33302f" stroke-width="1.1"><rect x="65" y="30.6" width="16.4" height="10.4" rx="4.6"/><rect x="83.6" y="30.6" width="15.6" height="10.4" rx="4.6"/></g><path d="M81.4 34 C82.2 33.4 82.8 33.4 83.6 34 M65 33.6 L62 32.6 M99.2 33.6 L102.4 33" fill="none" stroke="#33302f" stroke-width="1.2"/><ellipse cx="73.4" cy="36" rx="2" ry="1" fill="#3a2c28"/><ellipse cx="91.2" cy="36" rx="2" ry="1" fill="#3a2c28"/><path d="M79.6 46.4 C81 47.6 83.6 47.6 85 46.4" fill="none" stroke="#b9836c" stroke-width="0.9"/><ellipse cx="81" cy="54.6" rx="6" ry="2.4" fill="#c0606c"/><path d="M76 53.8 H86" stroke="#7a3038" stroke-width="0.9"/></g><path d="M6.2 16.4 V9.2 H30" fill="none" stroke="#b9c0c8" stroke-width="0.8"/><path d="M112 9.4 H153.9 V24.2" fill="none" stroke="#c4cad1" stroke-width="0.9"/></svg>
<span class="t" style="top:9px;height:8px;line-height:8px;font-size:3.6px;color:#b9c0c8;font-family:'Liberation Serif','Noto Serif CJK SC',serif;left:820.30px;transform:scaleX(1.2556);">Generation AI</span>
<span class="t" style="top:10px;height:9px;line-height:9px;font-size:4.8px;color:#dfe3e8;font-weight:700;left:938.80px;transform:scaleX(1.0630);">nemotaku</span>
<div style="left:812.9px;top:80px;width:35.3px;height:8.7px;background:rgba(72,68,68,0.8);border-radius:1px;"></div>
<span class="t" style="top:78px;height:13px;line-height:13px;font-size:7.6px;color:#fff;left:814.00px;transform:scaleX(1.0036);">根本 拓也</span>
</div></body></html>
